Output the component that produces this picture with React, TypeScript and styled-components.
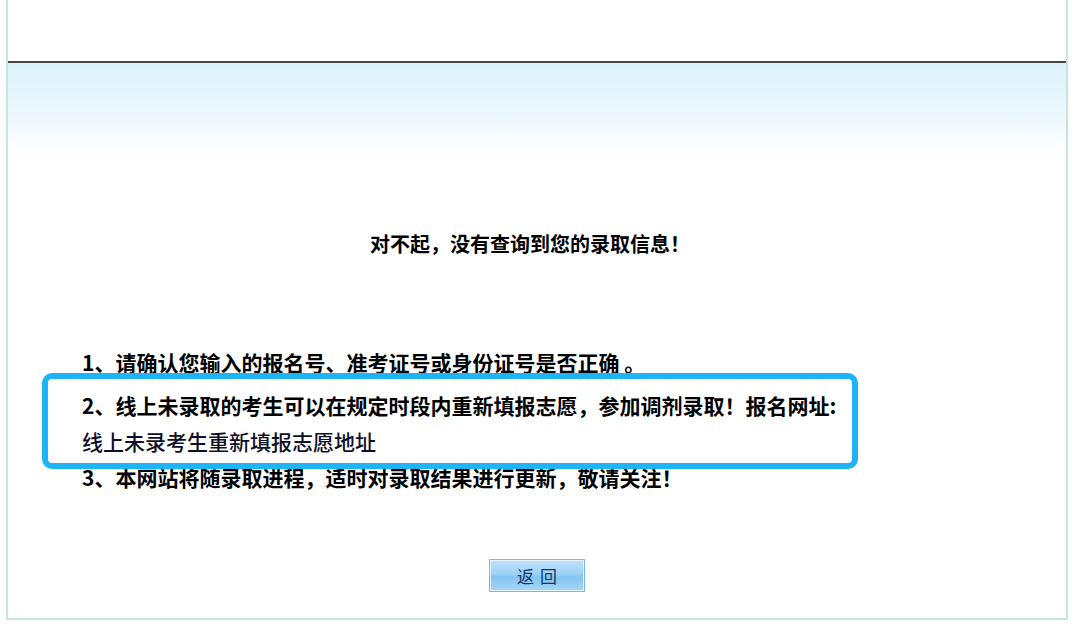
import styled, { createGlobalStyle } from 'styled-components';

const GlobalStyle = createGlobalStyle`
  html, body {
    margin: 0;
    padding: 0;
    background: #fff;
  }
  body {
    font-family: "Noto Sans CJK SC", "Noto Sans", sans-serif;
    color: #000;
  }
`;

const Frame = styled.div`
  margin-left: 6px;
  width: 1058px;
  height: 618px;
  border: 2px solid #c6e6dc;
  border-top: none;
  background: #fff;
  display: flex;
  flex-direction: column;
`;

const Header = styled.div`
  height: 61px;
  border-bottom: 2px solid #474747;
  box-shadow: 0 1px 0 #b9b9b9;
`;

const Panel = styled.div`
  flex: 1;
  display: flex;
  flex-direction: column;
  background: linear-gradient(#dbf2fb 0, #eaf7fd 45px, #fff 95px);
`;

const Title = styled.h1`
  margin: 167px 0 0;
  padding-right: 14px;
  font-size: 20px;
  line-height: 28px;
  font-weight: 700;
  text-align: center;
`;

const List = styled.div`
  margin-top: 85px;
  padding-left: 74px;
  display: flex;
  flex-direction: column;
`;

const Item = styled.div`
  font-size: 21px;
  line-height: 38px;
  font-weight: 700;
  white-space: nowrap;
`;

const Highlight = styled.div`
  position: relative;
  margin-top: 5px;

  &::after {
    content: '';
    position: absolute;
    top: -13px;
    left: -40px;
    width: 816px;
    height: 96px;
    box-sizing: border-box;
    border: 6px solid #1fb4f7;
    border-radius: 10px;
    pointer-events: none;
  }
`;

const LinkLine = styled.a`
  display: block;
  font-size: 21px;
  line-height: 34px;
  font-weight: 500;
  color: #0e0e28;
  text-decoration: none;
`;

const Footer = styled.div`
  display: flex;
  justify-content: center;
  margin-top: 63px;
`;

const BackButton = styled.button`
  width: 96px;
  height: 33px;
  padding: 0;
  border: 1px solid #7ab8e6;
  box-shadow: inset 0 0 0 1px #e4f3fe;
  background: linear-gradient(#c3e3fb 0%, #9cd2f6 45%, #84c4f0 55%, #a6d7f8 100%);
  color: #173566;
  font-family: "Noto Sans CJK SC", sans-serif;
  font-size: 17px;
  letter-spacing: 6px;
  text-indent: 6px;
  cursor: pointer;
`;

export default function App() {
  return (
    <>
      <GlobalStyle />
      <Frame>
        <Header />
        <Panel>
          <Title>对不起，没有查询到您的录取信息！</Title>
          <List>
            <Item>1、请确认您输入的报名号、准考证号或身份证号是否正确 。</Item>
            <Highlight>
              <Item>2、线上未录取的考生可以在规定时段内重新填报志愿，参加调剂录取！报名网址:</Item>
              <LinkLine href="#">线上未录考生重新填报志愿地址</LinkLine>
            </Highlight>
            <Item>3、本网站将随录取进程，适时对录取结果进行更新，敬请关注！</Item>
          </List>
          <Footer>
            <BackButton>返回</BackButton>
          </Footer>
        </Panel>
      </Frame>
    </>
  );
}
